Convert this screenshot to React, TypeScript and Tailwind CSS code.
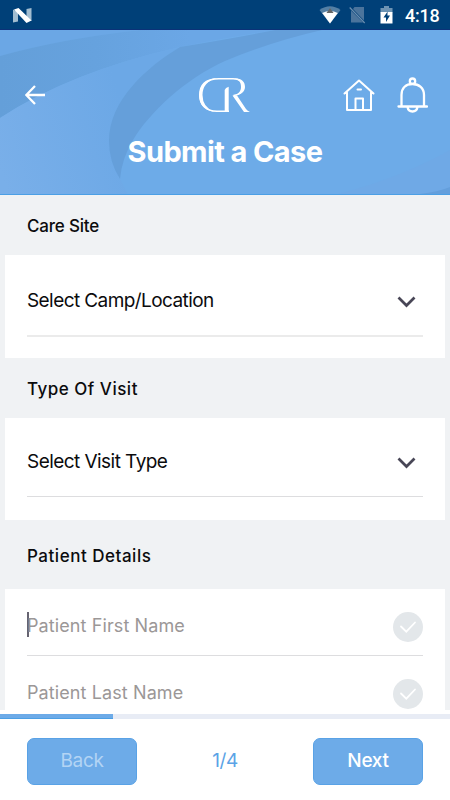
import React from "react";

const BatteryIcon = () => (
  <svg width="13" height="18" viewBox="0 0 13 18" fill="none">
    <path d="M4 0h5v2h3.500v4.500H.500V2H4z" fill="#6d93b3" />
    <path d="M.500 6h12v11.500h-12z" fill="#fff" />
    <path d="M7.600 5.500L3.500 11.500h2.500v4.500l4-6.500H7.400z" fill="#004078" />
  </svg>
);

const StatusBar = () => (
  <div className="flex h-[30px] shrink-0 items-center border-b border-[#0b3278] bg-[#004078] pr-[10px] pl-[13px] pt-px">
    <svg width="19" height="15" viewBox="0 0 19 15">
      <path d="M0 1.500L5 4v9.500L0 14.500zM13.500 1L18.500 0v13l-5-2z" fill="#a3bdd0" />
      <path d="M1 1.500L5.500 0 18.500 12.500 13.500 15z" fill="#fff" />
    </svg>
    <div className="ml-auto flex items-center">
      <svg width="22" height="18" viewBox="0 0 22 18">
        <path d="M.500 4Q11-3.500 21.500 4L11 17.500z" fill="#547fa4" />
        <path d="M3.200 7Q11 3 18.800 7L11 17.500z" fill="#fff" />
        <path d="M11 2l3.500 5h-7z" fill="#666" />
      </svg>
      <svg className="ml-[8px]" width="17" height="18" viewBox="0 0 17 18">
        <path d="M5.500 1H15v13.500L4 3zM2 4.500L14 16.500H2z" fill="#4b749c" />
        <path d="M.700 1.500l15 15.500" stroke="#6a8eaf" strokeWidth="1.200" />
      </svg>
      <div className="ml-[14px]">
        <BatteryIcon />
      </div>
      <span className="ml-[12px] w-[35px] whitespace-nowrap pt-px font-[Roboto] text-[18px] leading-none font-medium tracking-[-0.2px] text-white">
        4:18
      </span>
    </div>
  </div>
);

const HeaderBackground = () => (
  <svg className="absolute inset-0" width="450" height="164" viewBox="0 30 450 164">
    <defs>
      <linearGradient id="glow" x1="0" y1="170" x2="130" y2="130" gradientUnits="userSpaceOnUse">
        <stop offset="0" stopColor="#79afe9" />
        <stop offset="1" stopColor="#6ca8e6" />
      </linearGradient>
      <linearGradient id="swoosh" x1="0" y1="0" x2="190" y2="0" gradientUnits="userSpaceOnUse">
        <stop offset="0" stopColor="#649fd9" />
        <stop offset="0.5" stopColor="#66a2de" />
        <stop offset="1" stopColor="#6ba7e6" />
      </linearGradient>
    </defs>
    <path d="M0 30h450v164H0z" fill="#6dabe8" />
    <path d="M0 30h140Q60 39 0 56z" fill="#6ba7e5" />
    <path d="M0 56Q60 39 140 30H275Q225 38 180 47Q70 72 0 118z" fill="url(#swoosh)" />
    <path d="M0 118Q70 72 180 47C147 67 109 100 109 141Q109 162 120 179L128 194H0z" fill="url(#glow)" />
    <path d="M180 47Q235 38 275 30H322Q270 42 225 61C185 79 150 112 133 140Q122 158 120 179Q109 162 109 141C109 100 147 67 180 47z" fill="#659fda" />
    <path d="M338 194Q400 178 450 150v44z" fill="#6fa9e6" />
    <path d="M420 194Q438 192 450 187v7z" fill="#649fdc" />
  </svg>
);

const Header = () => (
  <header className="relative h-[165px] shrink-0 border-b border-[#4b9fe5]">
    <HeaderBackground />
    <div className="relative flex h-[82px] items-end pl-[25px] pr-[22px]">
      <svg className="mb-[7px]" width="20" height="20" viewBox="0 0 20 20" fill="none" stroke="#fff" strokeWidth="2.300">
        <path d="M20 10H1.500M10 1L1.300 10l8.700 9" />
      </svg>
      <svg className="-mb-px ml-[152px]" width="54" height="36" viewBox="197 77 54 36" fill="none" stroke="#fff">
        <path d="M229 111.200H217C206 111.200 200 105 200 96C200 85 207 78.700 219 78.700H233C240 78.700 243 81.500 243 87C243 92 239 95 233.500 95.500" strokeWidth="1.500" />
        <path d="M217 78Q199 79 199 95Q199 109 214 111.800Q202.500 107 202.500 95Q202.500 82 217 78z" fill="#fff" stroke="none" />
        <path d="M234 78.500C240 80 241 83 241 87C241 91 239 94 233 95.800C240 95.500 245 92 245 87C245 81 241 78 234 78.500z" fill="#fff" stroke="none" />
        <path d="M224.700 111V90Q225.500 87.500 228.700 86.700V111z" fill="#fff" stroke="none" />
        <path d="M232.500 95.500H237L246 109Q247.500 111 250 111.900H244z" fill="#fff" stroke="none" />
      </svg>
      <svg className="ml-auto" width="32" height="33" viewBox="0 0 32 33" fill="none" stroke="#fff" strokeWidth="2" strokeLinejoin="round" strokeLinecap="round">
        <path d="M1.500 14.500L16 1.500l14.500 13M4 13.500V31h24V13.500M12.500 31V19.500h7.500V31M14.500 10.500h3.500" />
      </svg>
      <svg className="-mb-px ml-[22px]" width="31" height="36" viewBox="0 0 31 36" fill="none" stroke="#fff" strokeWidth="2.300">
        <circle cx="15.500" cy="4.200" r="2.700" />
        <path d="M4.500 29V18C4.500 11 9 7 15.500 7S27 11 27 18v11M1.500 29.500h28.500M10.500 30c.5 3 2 4.500 5 4.500s4.500-1.500 5-4.500" strokeLinecap="round" />
      </svg>
    </div>
    <h1 className="relative mt-[22px] text-center text-[29px] leading-[36px] font-bold tracking-[-0.6px] text-white">
      Submit a Case
    </h1>
  </header>
);

const SelectRow: React.FC<{ label: string; className: string }> = ({ label, className }) => (
  <div className={`flex items-center justify-between pr-[7px] ${className}`}>
    <span>{label}</span>
    <svg className="mt-px" width="19" height="12" viewBox="0 0 19 12" fill="none" stroke="#484656" strokeWidth="2.700">
      <path d="M1.500 1.500l8 8 8-8" />
    </svg>
  </div>
);

const CheckBadge = () => (
  <svg width="30" height="30" viewBox="0 0 30 30" fill="none">
    <circle cx="15" cy="15" r="15" fill="#e3e7ea" />
    <path d="M8 14.500l5.300 5.200L22 10.500" stroke="#fff" strokeWidth="1.800" strokeLinecap="round" />
  </svg>
);

export default function App() {
  return (
    <div className="flex h-[800px] w-[450px] flex-col overflow-hidden bg-white font-[Inter,sans-serif] text-[#0b0b0d]">
      <StatusBar />
      <Header />

      <main className="h-[515px] shrink-0 overflow-hidden bg-[#f0f2f4] px-[5px]">
        <h2 className="flex h-[60px] items-center pt-[4px] pl-[22px] text-[17px] font-medium tracking-[-0.2px]">Care Site</h2>
        <section className="h-[103px] bg-white px-[22px] text-[19px] tracking-[-0.58px]">
          <SelectRow label="Select Camp/Location" className="h-[82px] border-b-2 border-[#ebebeb] pt-[12px]" />
        </section>

        <h2 className="flex h-[60px] items-center pt-[4px] pl-[22px] text-[17px] font-medium tracking-[0.5px]">Type Of Visit</h2>
        <section className="h-[102px] bg-white px-[22px] text-[19px] tracking-[-0.55px]">
          <SelectRow label="Select Visit Type" className="h-[79px] border-b border-[#dddddf] pt-[10px]" />
        </section>

        <h2 className="flex h-[69px] items-center pt-[5px] pl-[22px] text-[17px] font-medium tracking-[0.52px]">Patient Details</h2>
        <section className="bg-white px-[22px] text-[18px] tracking-[0.1px] text-[#9b9797]">
          <div className="flex h-[67px] items-center justify-between border-b border-[#dddddf] pt-[10px]">
            <div className="flex items-center">
              <span className="-mt-[5px] -mr-[2px] h-[25px] w-[2px] bg-[#666370]" />
              <span className="-mt-[4px]">Patient First Name</span>
            </div>
            <CheckBadge />
          </div>
          <div className="flex h-[67px] items-center justify-between pt-[9px]">
            <span className="-mt-[4px]">Patient Last Name</span>
            <CheckBadge />
          </div>
        </section>
      </main>

      <div className="mt-[4px] h-[5px] shrink-0 bg-[#e8ecf5]">
        <div className="h-full w-1/4 border-b border-[#4b9fe5] bg-[#6dabe8]" />
      </div>
      <footer className="flex items-start justify-between px-[27px] pt-[19px] text-[19px]">
        <button className="h-[47px] w-[110px] rounded-[7px] border border-[#59a2e6] bg-[#6dabe8] tracking-[-0.3px] text-[#b3d4f4]">Back</button>
        <span className="leading-[46px] tracking-[-0.4px] text-[#5ba3e6]">1/4</span>
        <button className="h-[47px] w-[110px] rounded-[7px] border border-[#59a2e6] bg-[#6dabe8] font-medium tracking-[-0.3px] text-white">Next</button>
      </footer>
    </div>
  );
}
